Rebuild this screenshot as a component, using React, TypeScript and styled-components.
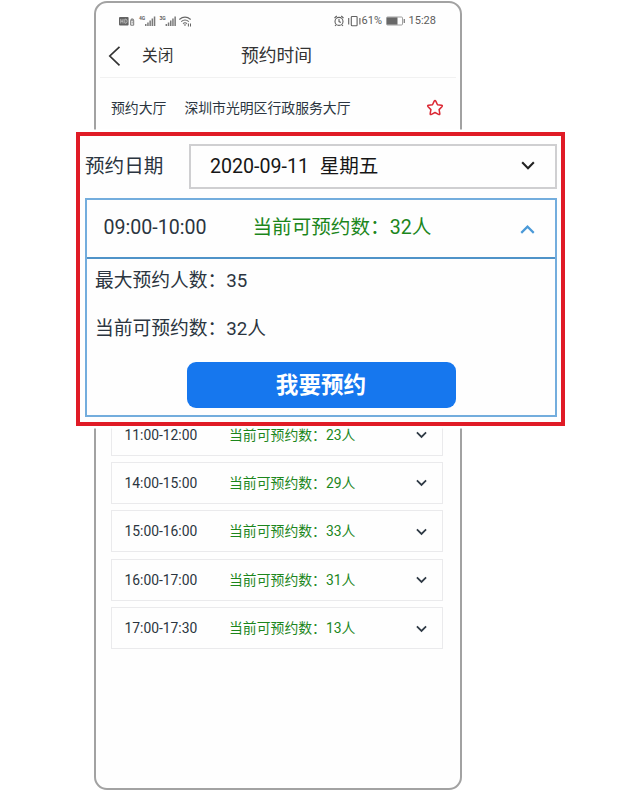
import React from "react";
import styled, { createGlobalStyle } from "styled-components";

const GlobalStyle = createGlobalStyle`
  * { box-sizing: border-box; }
  body {
    margin: 0;
    background: #fff;
    font-family: Roboto, "Noto Sans CJK SC", sans-serif;
    color: #2b3540;
  }
`;

const Page = styled.main`
  position: relative;
  width: 640px;
  height: 791px;
  padding: 1px 0 0 94px;
  overflow: hidden;
`;

const Phone = styled.section`
  display: flex;
  flex-direction: column;
  width: 368px;
  height: 788.5px;
  border: 2px solid #a2a2a2;
  border-radius: 13px;
  background: #fefefe;
`;

const StatusBar = styled.div`
  display: flex;
  justify-content: space-between;
  align-items: center;
  height: 35px;
  padding: 0 24px 0 22px;
  color: #5c5c5c;
`;

const StatusGroup = styled.div`
  display: flex;
  align-items: center;
  font-size: 11px;
  line-height: 14px;
`;

const Percent = styled.span`
  width: 23px;
  margin-left: 0;
  white-space: nowrap;
`;

const Clock = styled.span`
  margin-left: 3px;
  white-space: nowrap;
`;

const NavBar = styled.header`
  display: flex;
  align-items: center;
  height: 40px;
  margin: 0 4px;
  padding: 0 0 3px 8px;
  border-bottom: 1px solid #f1f1f1;
  color: #333;
`;

const CloseText = styled.span`
  width: 99px;
  margin-left: 21px;
  font-size: 15.7px;
  line-height: 24px;
`;

const Title = styled.h1`
  margin: 0;
  font-size: 17.8px;
  font-weight: 400;
  line-height: 26px;
`;

const HallRow = styled.div`
  display: flex;
  align-items: center;
  height: 60px;
  padding: 0 16px 0 15px;
  font-size: 13.85px;
  line-height: 20px;
`;

const HallName = styled.span`
  flex: 1;
  margin-left: 18px;
`;

const SlotList = styled.div`
  display: flex;
  flex-direction: column;
  gap: 6.4px;
  margin: 275.6px 17px 0 15px;
`;

const Slot = styled.div`
  display: flex;
  align-items: center;
  height: 42px;
  padding: 0 15px 0 12.5px;
  border: 1px solid #eaeaec;
  font-size: 13.85px;
  line-height: 20px;
`;

const SlotTime = styled.span`
  width: 104.5px;
`;

const SlotCount = styled.span`
  flex: 1;
  color: #1c861c;
`;

/* Enlarged view that sits over the phone screen. */
const Callout = styled.section`
  position: absolute;
  left: 76px;
  top: 132px;
  width: 489px;
  height: 294px;
  padding: 8px 4px 0 5px;
  border: 4px solid #e01b26;
  background: #fefefe;
  box-shadow: 0 0 0 2.5px #fff;
`;

const DateRow = styled.div`
  display: flex;
  align-items: center;
  height: 45px;
`;

const DateLabel = styled.span`
  width: 104px;
  font-size: 19.6px;
  line-height: 28px;
`;

const DateSelect = styled.div`
  display: flex;
  align-items: center;
  flex: 1;
  height: 45px;
  padding: 0 20px 0 19px;
  border: 2px solid #cfcfd1;
  font-size: 19.6px;
  line-height: 28px;
  color: #161616;

  svg {
    margin-bottom: 4px;
  }
`;

const DateValue = styled.span`
  flex: 1;
  white-space: pre;
  word-spacing: 0.5px;
`;

const Panel = styled.div`
  height: 219px;
  margin-top: 9px;
  border: 2px solid #73addd;
`;

const PanelHead = styled.div`
  display: flex;
  align-items: center;
  height: 59px;
  padding: 0 20px 2px 16.5px;
  border-bottom: 2px solid #4f93c8;
  font-size: 19.6px;
  line-height: 28px;

  svg {
    margin-top: 4px;
  }
`;

const PanelTime = styled.span`
  width: 149px;
`;

const PanelCount = styled.span`
  flex: 1;
  color: #1c861c;
`;

const PanelLine = styled.p`
  height: 48px;
  margin: 0;
  padding-left: 8px;
  font-size: 18.75px;
  line-height: 44px;
`;

const BookButton = styled.button`
  display: flex;
  align-items: center;
  justify-content: center;
  width: 269px;
  height: 46px;
  margin: 7px 0 0 99.5px;
  padding: 1px 0 0;
  border: 0;
  border-radius: 9px;
  background: #1677ee;
  color: #fff;
  font: 700 22.6px/30px Roboto, "Noto Sans CJK SC", sans-serif;
`;

type ChevronProps = { size: number; color: string; width: number; up?: boolean };

const Chevron = ({ size, color, width, up }: ChevronProps) => (
  <svg width={size} height={size} viewBox="0 0 12 12" fill="none" stroke={color} strokeWidth={width}>
    <path d={up ? "M1 8.7 6 3.7 11 8.7" : "M1 3.7 6 8.7 11 3.7"} />
  </svg>
);

const SignalIcons = () => (
  <svg width="74" height="14" viewBox="0 0 74 14" fill="#636363">
    <rect x="1" y="3" width="9.6" height="8.5" rx="1" />
    <path d="M2.8 5v4.5M2.8 7.2H5M5 5v4.5M6.8 5.2v4h.8q1.5 0 1.5-2t-1.5-2z" fill="none" stroke="#ddd" strokeWidth=".7" />
    <path d="M12.7 6.2h3v5h-3zM13.2 6V5h2v1" fill="none" stroke="#777" strokeWidth="1" />
    <path d="M14.2 7.5v2" stroke="#777" strokeWidth=".8" />
    <text x="21" y="5.6" fontSize="5" fontWeight="700">4G</text>
    <text x="41.5" y="5.6" fontSize="5" fontWeight="700">3G</text>
    <path d="M27 10h1.5v2H27zM29.2 8.5h1.5V12h-1.5zM31.4 6.6h1.5V12h-1.5zM33.6 4.6h1.5V12h-1.5zM35.8 2.6h1.5V12h-1.5z" opacity=".85" />
    <path d="M47.6 10h1.5v2h-1.5zM49.8 8.5h1.5V12h-1.5zM52 6.6h1.5V12H52zM54.2 4.6h1.5V12h-1.5zM56.4 2.6h1.5V12h-1.5z" opacity=".85" />
    <g fill="none" stroke="#686868" strokeWidth="1.1">
      <path d="M61.3 5.5Q67 .8 72.7 5.5M63.2 7.6Q67 4.4 70.8 7.6M65 9.6Q67 8 69 9.6" />
    </g>
    <path d="m65.6 10.5 1.4 1.5 1.4-1.5zM69.9 9.5h1v3h-1zM72 9.5h1v3h-1z" />
  </svg>
);

const AlarmVibrate = () => (
  <svg width="29" height="14" viewBox="0 0 29 14" fill="none" stroke="#626262" strokeWidth="1.1">
    <circle cx="6" cy="7.4" r="4" />
    <path d="M6 5v2.6l1.8 1M1.5 4 3.8 2M8.2 2l2.3 2M3.1 10.8 2 12M8.9 10.8 10 12" />
    <rect x="18.3" y="2.5" width="5.8" height="9.2" rx=".8" />
    <path d="M15.7 4v6.5M26.9 4v6.5" />
  </svg>
);

const Battery = () => (
  <svg width="21" height="14" viewBox="0 0 21 14" fill="none" stroke="#888">
    <rect x="1.5" y="3" width="16" height="8" rx="1" strokeWidth=".8" />
    <path d="M2 3.4h10.5v7.2H2z" fill="#686868" stroke="none" />
    <path d="M19.3 5v4" strokeWidth="1.4" />
  </svg>
);

const BackArrow = () => (
  <svg width="13" height="22" viewBox="0 0 13 22" fill="none" stroke="#333" strokeWidth="1.7">
    <path d="M11.5 1.8 1.8 11l9.7 9.3" />
  </svg>
);

const Star = () => (
  <svg width="18" height="18" viewBox="0 0 18 18" fill="none" stroke="#db2834" strokeWidth="1.5" strokeLinejoin="round">
    <path d="M8.2 2.1Q9 .7 9.8 2.1L11.5 5.7l3.9.6q1.6.3.5 1.5l-2.8 2.8.7 3.9q.2 1.6-1.3.9L9 13.5l-3.5 1.9q-1.5.7-1.3-.9l.7-3.9-2.8-2.8q-1.1-1.2.5-1.5l3.9-.6z" />
  </svg>
);

const slots = [
  { time: "11:00-12:00", count: 23 },
  { time: "14:00-15:00", count: 29 },
  { time: "15:00-16:00", count: 33 },
  { time: "16:00-17:00", count: 31 },
  { time: "17:00-17:30", count: 13 },
];

export default function App() {
  return (
    <>
      <GlobalStyle />
      <Page>
        <Phone>
          <StatusBar>
            <SignalIcons />
            <StatusGroup>
              <AlarmVibrate />
              <Percent>61%</Percent>
              <Battery />
              <Clock>15:28</Clock>
            </StatusGroup>
          </StatusBar>
          <NavBar>
            <BackArrow />
            <CloseText>关闭</CloseText>
            <Title>预约时间</Title>
          </NavBar>
          <HallRow>
            <span>预约大厅</span>
            <HallName>深圳市光明区行政服务大厅</HallName>
            <Star />
          </HallRow>
          <SlotList>
            {slots.map((slot) => (
              <Slot key={slot.time}>
                <SlotTime>{slot.time}</SlotTime>
                <SlotCount>当前可预约数：{slot.count}人</SlotCount>
                <Chevron size={11} color="#2f3a45" width={1.9} />
              </Slot>
            ))}
          </SlotList>
        </Phone>
        <Callout>
          <DateRow>
            <DateLabel>预约日期</DateLabel>
            <DateSelect>
              <DateValue>{"2020-09-11  星期五"}</DateValue>
              <Chevron size={14} color="#222" width={1.8} />
            </DateSelect>
          </DateRow>
          <Panel>
            <PanelHead>
              <PanelTime>09:00-10:00</PanelTime>
              <PanelCount>当前可预约数：32人</PanelCount>
              <Chevron size={15} color="#4b9ad8" width={1.7} up />
            </PanelHead>
            <PanelLine>最大预约人数：35</PanelLine>
            <PanelLine>当前可预约数：32人</PanelLine>
            <BookButton>我要预约</BookButton>
          </Panel>
        </Callout>
      </Page>
    </>
  );
}
